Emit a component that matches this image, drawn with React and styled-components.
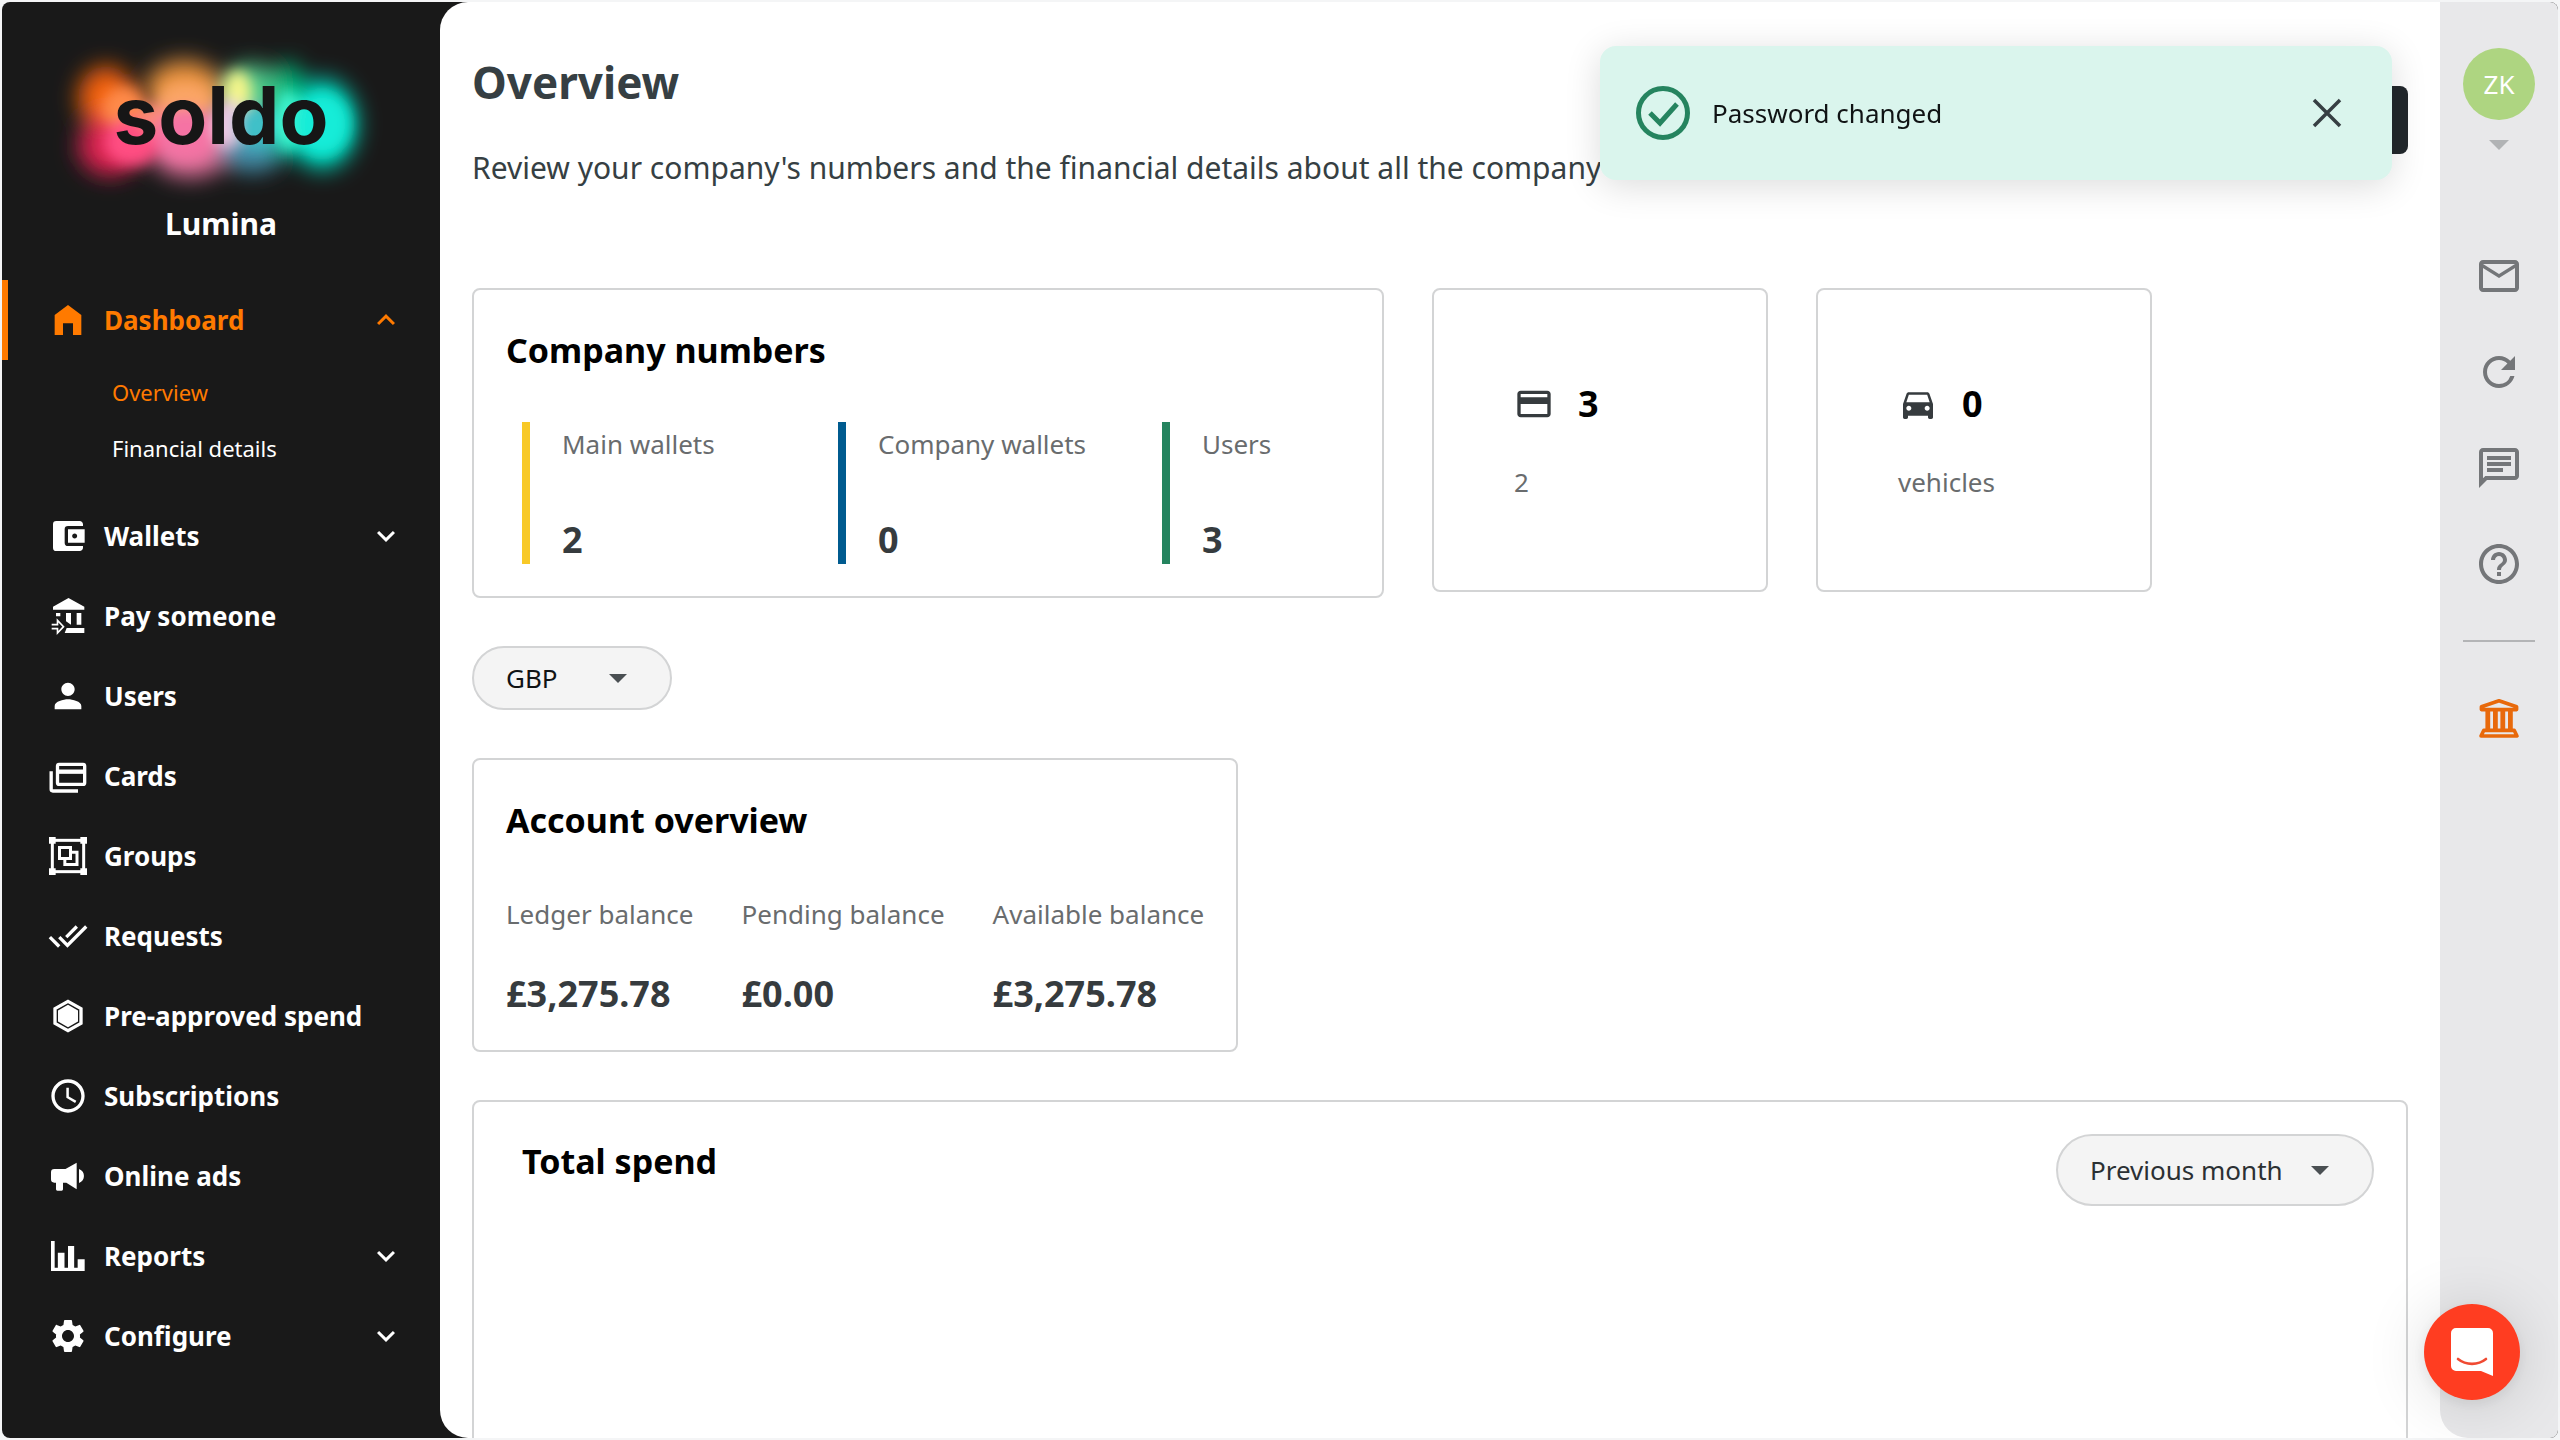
import React from "react";
import styled, { createGlobalStyle } from "styled-components";
import {
  MdAccountBalanceWallet,
  MdPerson,
  MdDoneAll,
  MdSchedule,
  MdSettings,
  MdCreditCard,
  MdDirectionsCar,
  MdOutlineMail,
  MdRefresh,
  MdOutlineChat,
  MdHelpOutline,
} from "react-icons/md";

const HomeIcon = () => (
  <svg viewBox="0 0 24 24" fill="currentColor">
    <path d="M4 21V9l8-6 8 6v12h-5v-7H9v7z" />
  </svg>
);

const PayIcon = () => (
  <svg viewBox="0 0 24 24" fill="currentColor">
    <path d="M3 8.2V6.4l9.3-5.2 9.5 5.2v1.8zM4.8 10.2h2.6v2H4.8zM10.8 10.2h3v7.1l-3-2.2zM17.2 10.2H20v7.1h-2.8zM11.2 19.2h10.6v3H10z" />
    <path
      d="M2.2 17.2h3.5v-2.6l3.6 3.8-3.6 3.8v-2.6H2.2"
      fill="none"
      stroke="currentColor"
      strokeWidth="1"
    />
  </svg>
);

const CardsIcon = () => (
  <svg viewBox="0 0 24 24" fill="none" stroke="currentColor" strokeWidth="2">
    <rect x="5.7" y="5" width="16.3" height="12" rx="1" />
    <path d="M5.7 9.4H22" strokeWidth="2.6" />
    <path d="M1.9 9.2V20a1 1 0 0 0 1 1H18" />
  </svg>
);

const GroupsIcon = () => (
  <svg viewBox="0 0 24 24" fill="none" stroke="currentColor" strokeWidth="1.8">
    <rect x="2.6" y="2.6" width="18.8" height="18.8" />
    <path
      d="M.6.6h4v4h-4zM19.4.6h4v4h-4zM.6 19.4h4v4h-4zM19.4 19.4h4v4h-4z"
      fill="currentColor"
      stroke="none"
    />
    <rect x="6.9" y="6.9" width="6.6" height="6.6" />
    <path d="M14.4 9.8h3v7.3h-7.3v-3.4" />
  </svg>
);

const HexIcon = () => (
  <svg viewBox="0 0 24 24">
    <path
      d="M12 3.2l7.8 4.4v8.8L12 20.8l-7.8-4.4V7.6z"
      fill="none"
      stroke="currentColor"
      strokeWidth="2"
    />
    <path d="M12 5.3l6 3.4v6.6l-6 3.4-6-3.4V8.7z" fill="currentColor" />
  </svg>
);

const AdsIcon = () => (
  <svg viewBox="0 0 24 24" fill="currentColor">
    <path d="M3.8 7.8h6.7L17.2 4v16l-6.2-4H9v4a.8.8 0 0 1-.8.8H5.6a.8.8 0 0 1-.8-.8v-4h-1a2 2 0 0 1-2-2V9.8a2 2 0 0 1 2-2zM18.6 7.8c4 1.4 4 7 0 8.4z" />
  </svg>
);

const ReportsIcon = () => (
  <svg viewBox="0 0 24 24" fill="currentColor">
    <path d="M1.8 3h2.2v16h1.9v-9h4v9h2.1V6h3.7v13h2.1v-5H22v7H1.8z" />
  </svg>
);

const Chevron = ({ up }) => (
  <svg viewBox="0 0 24 24" fill="currentColor">
    {up ? (
      <path d="M7.41 15.41L12 10.83l4.59 4.58L18 14l-6-6-6 6z" />
    ) : (
      <path d="M7.41 8.59L12 13.17l4.59-4.58L18 10l-6 6-6-6z" />
    )}
  </svg>
);

const BankIcon = () => (
  <svg
    viewBox="0 0 24 24"
    fill="none"
    stroke="currentColor"
    strokeWidth="1.8"
    strokeLinejoin="round"
  >
    <path d="M3.2 7.8V6.4L12 3.4l8.800 3v1.400zM4.400 18.200h15.200l1.400 2.800H3z" />
    <path d="M6.400 8v10M10.200 8v10M13.900 8v10M17.700 8v10" strokeWidth="2.400" />
  </svg>
);

const Logo = () => (
  <LogoSvg viewBox="0 0 438 202" role="img" aria-label="soldo">
    <defs>
      <filter id="soft" x="-60%" y="-60%" width="220%" height="220%">
        <feGaussianBlur stdDeviation="11" />
      </filter>
      <filter id="tight" x="-60%" y="-60%" width="220%" height="220%">
        <feGaussianBlur stdDeviation="7" />
      </filter>
    </defs>
    <g filter="url(#soft)">
      <ellipse cx="104" cy="96" rx="28" ry="32" fill="#f2600c" />
      <ellipse cx="108" cy="144" rx="32" ry="30" fill="#d9214f" />
      <ellipse cx="182" cy="86" rx="38" ry="28" fill="#e8923c" />
      <ellipse cx="188" cy="144" rx="42" ry="32" fill="#e0709a" />
      <ellipse cx="250" cy="90" rx="30" ry="28" fill="#4fc98c" />
      <ellipse cx="250" cy="144" rx="34" ry="26" fill="#4490ac" />
      <ellipse cx="320" cy="122" rx="36" ry="46" fill="#00c9b0" />
      <ellipse cx="286" cy="90" rx="16" ry="30" fill="#00b377" />
      <ellipse cx="280" cy="136" rx="14" ry="20" fill="#00b39b" />
    </g>
    <g filter="url(#tight)">
      <ellipse cx="122" cy="106" rx="22" ry="22" fill="#ff8a4a" />
      <ellipse cx="130" cy="140" rx="28" ry="24" fill="#ff4d82" />
      <ellipse cx="154" cy="116" rx="16" ry="16" fill="#fb8a78" />
      <ellipse cx="184" cy="98" rx="28" ry="18" fill="#fba565" />
      <ellipse cx="184" cy="132" rx="32" ry="26" fill="#f573a4" />
      <ellipse cx="236" cy="90" rx="14" ry="22" fill="#f4f58a" />
      <ellipse cx="226" cy="122" rx="16" ry="24" fill="#ecc9e4" />
      <ellipse cx="254" cy="124" rx="20" ry="22" fill="#3fc0c8" />
      <ellipse cx="286" cy="118" rx="14" ry="30" fill="#3df5cd" />
      <ellipse cx="320" cy="122" rx="28" ry="32" fill="#12ecd8" />
    </g>
    <text
      x="219"
      y="142"
      textAnchor="middle"
      fontFamily="Inter, sans-serif"
      fontWeight="700"
      fontSize="80"
      fill="#161616"
    >
      soldo
    </text>
  </LogoSvg>
);

const navItems = [
  {
    label: "Dashboard",
    icon: <HomeIcon />,
    active: true,
    expandable: true,
    children: ["Overview", "Financial details"],
  },
  { label: "Wallets", icon: <MdAccountBalanceWallet />, expandable: true },
  { label: "Pay someone", icon: <PayIcon /> },
  { label: "Users", icon: <MdPerson /> },
  { label: "Cards", icon: <CardsIcon /> },
  { label: "Groups", icon: <GroupsIcon /> },
  { label: "Requests", icon: <MdDoneAll /> },
  { label: "Pre-approved spend", icon: <HexIcon /> },
  { label: "Subscriptions", icon: <MdSchedule /> },
  { label: "Online ads", icon: <AdsIcon /> },
  { label: "Reports", icon: <ReportsIcon />, expandable: true },
  { label: "Configure", icon: <MdSettings />, expandable: true },
];

const stats = [
  { label: "Main wallets", value: "2", color: "#f8c927" },
  { label: "Company wallets", value: "0", color: "#005b8f" },
  { label: "Users", value: "3", color: "#25845f" },
];

const balances = [
  { label: "Ledger balance", value: "£3,275.78" },
  { label: "Pending balance", value: "£0.00" },
  { label: "Available balance", value: "£3,275.78" },
];

function PillSelect({ label, options, ...rest }) {
  return (
    <Pill {...rest}>
      <select aria-label={label}>
        {options.map((option) => (
          <option key={option}>{option}</option>
        ))}
      </select>
      <svg viewBox="0 0 18 9">
        <path d="M0 0h18L9 9z" fill="currentColor" />
      </svg>
    </Pill>
  );
}

function Sidebar() {
  return (
    <Side>
      <Logo />
      <OrgName>Lumina</OrgName>
      <nav>
        {navItems.map((item) => (
          <React.Fragment key={item.label}>
            <NavLink href="#" $active={item.active}>
              <NavIcon>{item.icon}</NavIcon>
              <span>{item.label}</span>
              {item.expandable && (
                <NavChevron>
                  <Chevron up={item.active} />
                </NavChevron>
              )}
            </NavLink>
            {item.children && (
              <SubNav>
                {item.children.map((child, i) => (
                  <SubLink href="#" key={child} $active={i === 0}>
                    {child}
                  </SubLink>
                ))}
              </SubNav>
            )}
          </React.Fragment>
        ))}
      </nav>
    </Side>
  );
}

function App() {
  return (
    <>
      <GlobalStyle />
      <Shell>
        <Sidebar />
        <Main>
          <Header>
            <div>
              <h1>Overview</h1>
              <p>
                Review your company's numbers and the financial details about
                all the company
              </p>
            </div>
            <HeaderButton type="button" aria-label="Actions" />
          </Header>
          <Content>
            <CardRow>
              <NumbersCard>
                <CardTitle>Company numbers</CardTitle>
                <Stats>
                  {stats.map((stat) => (
                    <Stat key={stat.label} $color={stat.color}>
                      <Label>{stat.label}</Label>
                      <Value>{stat.value}</Value>
                    </Stat>
                  ))}
                </Stats>
              </NumbersCard>
              <CountCard>
                <Count>
                  <MdCreditCard />
                  3
                </Count>
                <Label>2</Label>
              </CountCard>
              <CountCard>
                <Count>
                  <MdDirectionsCar />
                  0
                </Count>
                <Label>vehicles</Label>
              </CountCard>
            </CardRow>
            <PillSelect
              label="Currency"
              options={["GBP"]}
              $width={200}
              $height={64}
              $color="#101314"
            />
            <AccountCard>
              <CardTitle>Account overview</CardTitle>
              <Balances>
                {balances.map((item) => (
                  <Balance key={item.label}>
                    <Label>{item.label}</Label>
                    <Value>{item.value}</Value>
                  </Balance>
                ))}
              </Balances>
            </AccountCard>
            <SpendCard>
              <SpendTitle>Total spend</SpendTitle>
              <PillSelect
                label="Period"
                options={["Previous month"]}
                $width={318}
                $height={72}
                $color="#2b3033"
              />
            </SpendCard>
          </Content>
          <ScrollThumb />
        </Main>
        <Rail>
          <Avatar type="button">ZK</Avatar>
          <RailCaret viewBox="0 0 20 10">
            <path d="M0 0h20L10 10z" fill="#b1b3b5" />
          </RailCaret>
          <RailButton type="button" aria-label="Mail">
            <MdOutlineMail />
          </RailButton>
          <RailButton type="button" aria-label="Refresh">
            <MdRefresh />
          </RailButton>
          <RailButton type="button" aria-label="Messages">
            <MdOutlineChat />
          </RailButton>
          <RailButton type="button" aria-label="Help">
            <MdHelpOutline />
          </RailButton>
          <Divider />
          <RailButton type="button" aria-label="Bank" $accent>
            <BankIcon />
          </RailButton>
        </Rail>
      </Shell>
      <Toast role="status">
        <svg viewBox="0 0 54 54" fill="none" stroke="#25845f">
          <circle cx="27" cy="27" r="24.5" strokeWidth="5" />
          <path d="M14 27l10 10 17-19" strokeWidth="5" />
        </svg>
        <span>Password changed</span>
        <CloseButton type="button" aria-label="Close">
          <svg viewBox="0 0 30 30" fill="none" stroke="currentColor">
            <path d="M2 2l26 26M28 2L2 28" strokeWidth="3.5" />
          </svg>
        </CloseButton>
      </Toast>
      <ChatButton type="button" aria-label="Open chat">
        <svg viewBox="0 0 42 48">
          <path
            d="M5 0h32a5 5 0 0 1 5 5v43l-12-5H5a5 5 0 0 1-5-5V5a5 5 0 0 1 5-5z"
            fill="#fff"
          />
          <path
            d="M7 31c8 6.5 20 6.5 28 0"
            fill="none"
            stroke="#f04a32"
            strokeWidth="2.6"
            strokeLinecap="round"
          />
        </svg>
      </ChatButton>
    </>
  );
}

const GlobalStyle = createGlobalStyle`
  * {
    box-sizing: border-box;
  }
  body {
    margin: 0;
    background: #f4f5f6;
    font-family: "Noto Sans", "Open Sans", sans-serif;
    font-size: 26px;
    color: #363f43;
  }
  h1, h2, p {
    margin: 0;
  }
  a {
    text-decoration: none;
  }
  button, select {
    border: 0;
    padding: 0;
    font: inherit;
    cursor: pointer;
  }
  svg {
    display: block;
  }
`;

const Shell = styled.div`
  display: flex;
  height: calc(100vh - 4px);
  margin: 2px;
  border-radius: 8px;
  overflow: hidden;
  background: #191919;
`;

const Side = styled.aside`
  width: 438px;
  flex-shrink: 0;
  color: #fff;
`;

const LogoSvg = styled.svg`
  width: 100%;
`;

const OrgName = styled.div`
  margin-bottom: 36px;
  font-size: 30px;
  font-weight: 700;
  line-height: 40px;
  text-align: center;
`;

const NavLink = styled.a`
  display: flex;
  align-items: center;
  gap: 16px;
  height: 80px;
  padding: 0 36px 0 40px;
  border-left: 6px solid transparent;
  font-weight: 700;
  color: ${({ $active }) => ($active ? "#ff7a00" : "#fff")};
  background: linear-gradient(#ff7a00, #ff7a00) no-repeat border-box;
  background-size: ${({ $active }) => ($active ? "6px" : "0")} 100%;
`;

const NavIcon = styled.span`
  & svg {
    width: 40px;
    height: 40px;
  }
`;

const NavChevron = styled.span`
  margin-left: auto;
  & svg {
    width: 36px;
    height: 36px;
  }
`;

const SubNav = styled.div`
  display: flex;
  flex-direction: column;
  padding: 4px 0 20px 110px;
`;

const SubLink = styled.a`
  font-size: 22px;
  line-height: 56px;
  color: ${({ $active }) => ($active ? "#ff7a00" : "#fff")};
`;

const Main = styled.main`
  position: relative;
  flex: 1;
  min-width: 0;
  display: flex;
  flex-direction: column;
  overflow: hidden;
  background: #fff;
  border-radius: 28px 0 0 28px;
`;

const Header = styled.header`
  display: flex;
  justify-content: space-between;
  align-items: flex-start;
  height: 238px;
  flex-shrink: 0;
  padding: 50px 32px 0 32px;
  & h1 {
    font-size: 44px;
    line-height: 60px;
    font-weight: 700;
  }
  & p {
    margin-top: 36px;
    font-size: 30px;
    line-height: 40px;
    white-space: nowrap;
  }
`;

const HeaderButton = styled.button`
  width: 200px;
  height: 68px;
  margin-top: 34px;
  border-radius: 8px;
  background: #22282c;
`;

const Content = styled.div`
  flex: 1;
  min-height: 0;
  overflow: hidden;
  display: flex;
  flex-direction: column;
  align-items: flex-start;
  gap: 48px;
  padding: 48px 32px 0;
`;

const CardRow = styled.div`
  display: flex;
  align-items: flex-start;
  gap: 48px;
`;

const Card = styled.section`
  flex-shrink: 0;
  border: 2px solid #d3d4d5;
  border-radius: 8px;
  background: #fff;
`;

const NumbersCard = styled(Card)`
  width: 912px;
  padding: 36px 32px 32px;
`;

const CardTitle = styled.h2`
  font-size: 34px;
  line-height: 48px;
  font-weight: 700;
  color: #000;
`;

const Stats = styled.div`
  display: grid;
  grid-template-columns: 316fr 324fr 188fr;
  margin: 48px 0 0 16px;
`;

const Stat = styled.div`
  display: flex;
  flex-direction: column;
  justify-content: space-between;
  height: 142px;
  padding: 4px 0 0 32px;
  border-left: 8px solid ${({ $color }) => $color};
`;

const Label = styled.div`
  line-height: 36px;
  color: #696c6e;
  white-space: nowrap;
`;

const Value = styled.div`
  font-size: 36px;
  line-height: 48px;
  font-weight: 700;
  color: #363b3e;
`;

const CountCard = styled(Card)`
  width: 336px;
  padding: 90px 80px;
`;

const Count = styled.div`
  display: flex;
  align-items: center;
  gap: 24px;
  margin-bottom: 36px;
  font-size: 36px;
  line-height: 48px;
  font-weight: 700;
  color: #000;
  & svg {
    width: 40px;
    height: 40px;
    color: #363b3e;
  }
`;

const Pill = styled.div`
  position: relative;
  flex-shrink: 0;
  width: ${({ $width }) => $width}px;
  height: ${({ $height }) => $height}px;
  color: ${({ $color }) => $color};
  & select {
    appearance: none;
    width: 100%;
    height: 100%;
    padding: 0 32px;
    border: 2px solid #d3d4d5;
    border-radius: 36px;
    background: #f4f4f4;
    color: inherit;
  }
  & > svg {
    position: absolute;
    top: calc(50% - 4px);
    right: 45px;
    width: 18px;
    height: 9px;
    color: #4a4f52;
    pointer-events: none;
  }
`;

const AccountCard = styled(Card)`
  padding: 36px 32px 32px;
`;

const Balances = styled.div`
  display: flex;
  gap: 48px;
  margin-top: 52px;
`;

const Balance = styled.div`
  display: flex;
  flex-direction: column;
  gap: 38px;
`;

const SpendCard = styled(Card)`
  display: flex;
  justify-content: space-between;
  align-items: flex-start;
  align-self: stretch;
  min-height: 480px;
  padding: 32px 32px 32px 48px;
`;

const SpendTitle = styled(CardTitle)`
  line-height: 54px;
`;

const ScrollThumb = styled.div`
  position: absolute;
  top: 238px;
  right: 0;
  width: 8px;
  height: 404px;
  background: #d3d3d6;
`;

const Rail = styled.aside`
  display: flex;
  flex-direction: column;
  align-items: center;
  width: 118px;
  flex-shrink: 0;
  padding-top: 46px;
  background: #e8e8ea;
  border-bottom-left-radius: 28px;
  box-shadow: -28px 28px 0 0 #fff;
  clip-path: inset(0 0 0 -28px);
`;

const Avatar = styled.button`
  width: 72px;
  height: 72px;
  border-radius: 50%;
  background: #aed581;
  color: #fff;
`;

const RailCaret = styled.svg`
  width: 20px;
  height: 10px;
  flex-shrink: 0;
  margin: 20px 0 102px;
`;

const RailButton = styled.button`
  margin-bottom: 48px;
  background: none;
  color: ${({ $accent }) => ($accent ? "#e8690b" : "#747679")};
  & svg {
    width: 48px;
    height: 48px;
  }
`;

const Divider = styled.hr`
  width: 72px;
  height: 2px;
  margin: 4px 0 52px;
  border: 0;
  background: #b3b4b6;
`;

const Toast = styled.div`
  position: fixed;
  top: 46px;
  right: 168px;
  display: flex;
  align-items: center;
  gap: 22px;
  width: 792px;
  height: 134px;
  padding: 0 50px 0 36px;
  border-radius: 16px;
  background: #daf5ed;
  box-shadow: 0 6px 36px rgba(0, 0, 0, 0.14);
  color: #101314;
  & > svg {
    width: 54px;
    height: 54px;
  }
`;

const CloseButton = styled.button`
  margin-left: auto;
  background: none;
  color: #363f43;
  & svg {
    width: 30px;
    height: 30px;
  }
`;

const ChatButton = styled.button`
  position: fixed;
  right: 40px;
  bottom: 40px;
  display: flex;
  align-items: center;
  justify-content: center;
  width: 96px;
  height: 96px;
  border-radius: 50%;
  background: #ff3d21;
  box-shadow: 0 4px 16px rgba(0, 0, 0, 0.08), 0 4px 64px rgba(0, 0, 0, 0.14);
  & svg {
    width: 42px;
    height: 48px;
  }
`;

export default App;
